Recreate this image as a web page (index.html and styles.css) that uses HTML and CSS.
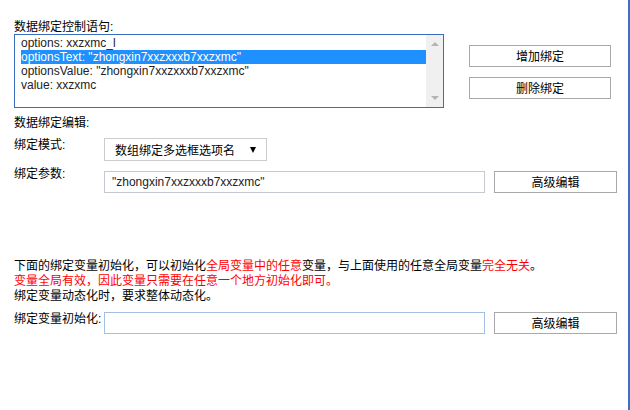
FILE: index.html
```html
<!DOCTYPE html>
<html lang="zh-CN">
<head>
<meta charset="utf-8">
<title>数据绑定</title>
<link rel="stylesheet" href="styles.css">
</head>
<body>
<div class="page">
  <div class="title">数据绑定控制语句:</div>
  <div class="bind-row">
    <div class="listbox">
      <div class="items">
        <div class="item">options: xxzxmc_l</div>
        <div class="item selected">optionsText: "zhongxin7xxzxxxb7xxzxmc"</div>
        <div class="item">optionsValue: "zhongxin7xxzxxxb7xxzxmc"</div>
        <div class="item">value: xxzxmc</div>
      </div>
      <div class="scrollbar">
        <span class="arrow up"></span>
        <span class="arrow down"></span>
      </div>
    </div>
    <div class="bind-buttons">
      <button class="btn wide">增加绑定</button>
      <button class="btn wide">删除绑定</button>
    </div>
  </div>

  <div class="title edit-title">数据绑定编辑:</div>

  <div class="row mode-row">
    <div class="label">绑定模式:</div>
    <div class="select">
      <span class="select-text">数组绑定多选框选项名</span>
      <span class="caret"></span>
    </div>
  </div>

  <div class="row param-row">
    <div class="label">绑定参数:</div>
    <div class="input gray">"zhongxin7xxzxxxb7xxzxmc"</div>
    <button class="btn adv">高级编辑</button>
  </div>

  <div class="notes">
    <div>下面的绑定变量初始化，可以初始化<span class="red">全局变量中的任意</span>变量，与上面使用的任意全局变量<span class="red">完全无关</span>。</div>
    <div class="red">变量全局有效，因此变量只需要在任意一个地方初始化即可。</div>
    <div>绑定变量动态化时，要求整体动态化。</div>
  </div>

  <div class="row init-row">
    <div class="label">绑定变量初始化:</div>
    <div class="input blue"></div>
    <button class="btn adv">高级编辑</button>
  </div>
</div>
</body>
</html>
```

FILE: styles.css
```css
* { box-sizing: border-box; }

html, body {
  margin: 0;
  padding: 0;
  background: #fff;
}

body {
  font-family: "Liberation Sans", "Noto Sans CJK SC", sans-serif;
  font-size: 12px;
  color: #000;
}

.page {
  width: 630px;
  height: 410px;
  padding: 20px 0 0 14px;
  border-right: 2px solid #3f6fc6;
}

.title {
  line-height: 14px;
  height: 14px;
}

.bind-row {
  display: flex;
  align-items: flex-start;
}

.listbox {
  width: 430px;
  height: 74px;
  border: 1px solid #3b6dbd;
  display: flex;
}

.items {
  flex: 1;
  padding: 1px 0 0 6px;
  color: #222;
}

.item {
  height: 14px;
  line-height: 14px;
  white-space: nowrap;
}

.item.selected {
  background: #1e90ff;
  color: #fff;
}

.scrollbar {
  width: 17px;
  background: #f0f0f0;
  display: flex;
  flex-direction: column;
  justify-content: space-between;
  align-items: center;
  padding: 7px 0 7px;
}

.arrow {
  width: 0;
  height: 0;
  border-left: 4px solid transparent;
  border-right: 4px solid transparent;
}

.arrow.up { border-bottom: 4px solid #b4b4b4; }
.arrow.down { border-top: 4px solid #b4b4b4; }

.bind-buttons {
  margin: 11px 0 0 25px;
  display: flex;
  flex-direction: column;
  gap: 10px;
}

.btn {
  font: inherit;
  font-family: "Noto Sans CJK SC", sans-serif;
  font-size: 12px;
  background: #fff;
  border: 1px solid #a9a9a9;
  border-radius: 0;
  height: 22px;
  padding: 0;
  line-height: 20px;
  color: #000;
  text-align: center;
}

.btn.wide { width: 142px; }
.btn.adv { width: 123px; margin-left: 9px; }

.edit-title {
  margin-top: 8px;
}

.row {
  display: flex;
  align-items: flex-start;
}

.label {
  width: 90px;
  line-height: 14px;
  flex-shrink: 0;
}

.mode-row { margin-top: 8px; }

.select {
  width: 163px;
  height: 23px;
  border: 1px solid #cccccc;
  display: flex;
  align-items: center;
  justify-content: space-between;
  padding: 0 10px 0 10px;
  font-family: "Noto Sans CJK SC", sans-serif;
}

.caret {
  width: 0;
  height: 0;
  border-left: 3px solid transparent;
  border-right: 3px solid transparent;
  border-top: 6px solid #000;
  margin-top: 1px;
}

.param-row { margin-top: 10px; }
.param-row .label { margin-top: -4px; }

.input {
  width: 381px;
  height: 22px;
  line-height: 20px;
  padding: 0 7px;
  color: #222;
  white-space: nowrap;
}

.input.gray { border: 1px solid #c5cad0; }
.input.blue { border: 1px solid #a4bfe6; }

.notes {
  margin-top: 66px;
  line-height: 15px;
}

.red { color: #ff0000; }

.init-row { margin-top: 8px; }
```
